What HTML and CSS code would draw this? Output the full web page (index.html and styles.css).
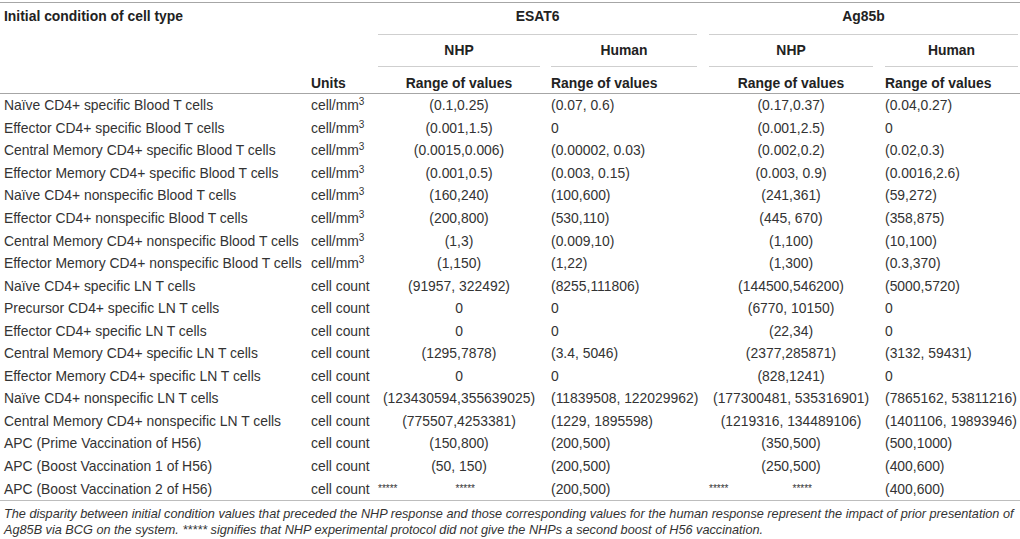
FILE: index.html
```html
<!DOCTYPE html>
<html lang="en">
<head>
<meta charset="utf-8">
<title>Initial conditions</title>
<link rel="stylesheet" href="styles.css">
</head>
<body>
<table class="data">
  <colgroup>
    <col class="w-type"><col class="w-unit"><col class="w-nhp1"><col class="w-hum1"><col class="w-nhp2"><col class="w-hum2">
  </colgroup>
  <thead>
    <tr class="hr1">
      <th class="type" colspan="2">Initial condition of cell type</th>
      <th class="grp g1" colspan="2"><div class="ul">ESAT6</div></th>
      <th class="grp g2" colspan="2"><div class="ul">Ag85b</div></th>
    </tr>
    <tr class="hr2">
      <th colspan="2"></th>
      <th class="nhp1"><div class="ul">NHP</div></th>
      <th class="hum1 ctr"><div class="ul">Human</div></th>
      <th class="nhp2"><div class="ul">NHP</div></th>
      <th class="hum2 ctr"><div class="ul">Human</div></th>
    </tr>
    <tr class="hr3">
      <th></th>
      <th class="unit">Units</th>
      <th class="nhp1">Range of values</th>
      <th class="hum1">Range of values</th>
      <th class="nhp2">Range of values</th>
      <th class="hum2">Range of values</th>
    </tr>
  </thead>
  <tbody>
    <tr><td class="type">Naïve CD4+ specific Blood T cells</td><td class="unit">cell/mm<sup>3</sup></td><td class="nhp1">(0.1,0.25)</td><td class="hum1">(0.07, 0.6)</td><td class="nhp2">(0.17,0.37)</td><td class="hum2">(0.04,0.27)</td></tr>
    <tr><td class="type">Effector CD4+ specific Blood T cells</td><td class="unit">cell/mm<sup>3</sup></td><td class="nhp1">(0.001,1.5)</td><td class="hum1">0</td><td class="nhp2">(0.001,2.5)</td><td class="hum2">0</td></tr>
    <tr><td class="type">Central Memory CD4+ specific Blood T cells</td><td class="unit">cell/mm<sup>3</sup></td><td class="nhp1">(0.0015,0.006)</td><td class="hum1">(0.00002, 0.03)</td><td class="nhp2">(0.002,0.2)</td><td class="hum2">(0.02,0.3)</td></tr>
    <tr><td class="type">Effector Memory CD4+ specific Blood T cells</td><td class="unit">cell/mm<sup>3</sup></td><td class="nhp1">(0.001,0.5)</td><td class="hum1">(0.003, 0.15)</td><td class="nhp2">(0.003, 0.9)</td><td class="hum2">(0.0016,2.6)</td></tr>
    <tr><td class="type">Naïve CD4+ nonspecific Blood T cells</td><td class="unit">cell/mm<sup>3</sup></td><td class="nhp1">(160,240)</td><td class="hum1">(100,600)</td><td class="nhp2">(241,361)</td><td class="hum2">(59,272)</td></tr>
    <tr><td class="type">Effector CD4+ nonspecific Blood T cells</td><td class="unit">cell/mm<sup>3</sup></td><td class="nhp1">(200,800)</td><td class="hum1">(530,110)</td><td class="nhp2">(445, 670)</td><td class="hum2">(358,875)</td></tr>
    <tr><td class="type">Central Memory CD4+ nonspecific Blood T cells</td><td class="unit">cell/mm<sup>3</sup></td><td class="nhp1">(1,3)</td><td class="hum1">(0.009,10)</td><td class="nhp2">(1,100)</td><td class="hum2">(10,100)</td></tr>
    <tr><td class="type">Effector Memory CD4+ nonspecific Blood T cells</td><td class="unit">cell/mm<sup>3</sup></td><td class="nhp1">(1,150)</td><td class="hum1">(1,22)</td><td class="nhp2">(1,300)</td><td class="hum2">(0.3,370)</td></tr>
    <tr><td class="type">Naïve CD4+ specific LN T cells</td><td class="unit">cell count</td><td class="nhp1">(91957, 322492)</td><td class="hum1">(8255,111806)</td><td class="nhp2">(144500,546200)</td><td class="hum2">(5000,5720)</td></tr>
    <tr><td class="type">Precursor CD4+ specific LN T cells</td><td class="unit">cell count</td><td class="nhp1">0</td><td class="hum1">0</td><td class="nhp2">(6770, 10150)</td><td class="hum2">0</td></tr>
    <tr><td class="type">Effector CD4+ specific LN T cells</td><td class="unit">cell count</td><td class="nhp1">0</td><td class="hum1">0</td><td class="nhp2">(22,34)</td><td class="hum2">0</td></tr>
    <tr><td class="type">Central Memory CD4+ specific LN T cells</td><td class="unit">cell count</td><td class="nhp1">(1295,7878)</td><td class="hum1">(3.4, 5046)</td><td class="nhp2">(2377,285871)</td><td class="hum2">(3132, 59431)</td></tr>
    <tr><td class="type">Effector Memory CD4+ specific LN T cells</td><td class="unit">cell count</td><td class="nhp1">0</td><td class="hum1">0</td><td class="nhp2">(828,1241)</td><td class="hum2">0</td></tr>
    <tr><td class="type">Naïve CD4+ nonspecific LN T cells</td><td class="unit">cell count</td><td class="nhp1">(123430594,355639025)</td><td class="hum1">(11839508, 122029962)</td><td class="nhp2">(177300481, 535316901)</td><td class="hum2">(7865162, 53811216)</td></tr>
    <tr><td class="type">Central Memory CD4+ nonspecific LN T cells</td><td class="unit">cell count</td><td class="nhp1">(775507,4253381)</td><td class="hum1">(1229, 1895598)</td><td class="nhp2">(1219316, 134489106)</td><td class="hum2">(1401106, 19893946)</td></tr>
    <tr><td class="type">APC (Prime Vaccination of H56)</td><td class="unit">cell count</td><td class="nhp1">(150,800)</td><td class="hum1">(200,500)</td><td class="nhp2">(350,500)</td><td class="hum2">(500,1000)</td></tr>
    <tr><td class="type">APC (Boost Vaccination 1 of H56)</td><td class="unit">cell count</td><td class="nhp1">(50, 150)</td><td class="hum1">(200,500)</td><td class="nhp2">(250,500)</td><td class="hum2">(400,600)</td></tr>
    <tr><td class="type">APC (Boost Vaccination 2 of H56)</td><td class="unit">cell count</td><td class="nhp1 stars"><div class="starpair s1"><span>*****</span><span>*****</span></div></td><td class="hum1">(200,500)</td><td class="nhp2 stars"><div class="starpair s2"><span>*****</span><span>*****</span></div></td><td class="hum2">(400,600)</td></tr>
  </tbody>
</table>
<p class="note">The disparity between initial condition values that preceded the NHP response and those corresponding values for the human response represent the impact of prior presentation of Ag85B via BCG on the system. ***** signifies that NHP experimental protocol did not give the NHPs a second boost of H56 vaccination.</p>
</body>
</html>
```
FILE: styles.css
```css
html, body {
  margin: 0;
  padding: 0;
  background: #fff;
}
body {
  font-family: "Liberation Sans", Arial, sans-serif;
  color: #333;
  width: 1020px;
}
.data {
  width: 1020px;
  border-collapse: collapse;
  table-layout: fixed;
  margin-top: 2px;
  border-top: 1px solid #a6a6a6;
  border-bottom: 1px solid #bdbdbd;
  font-size: 13.9px;
}
.w-type { width: 308px; }
.w-unit { width: 70px; }
.w-nhp1 { width: 162px; }
.w-hum1 { width: 157px; }
.w-nhp2 { width: 176px; }
.w-hum2 { width: 147px; }

th, td {
  padding: 0;
  font-weight: normal;
  text-align: left;
  white-space: nowrap;
}
th {
  font-weight: bold;
  color: #222;
}
.type { padding-left: 4px; }
.unit { padding-left: 3px; }
.nhp1 { text-align: center; }
.hum1 { padding-left: 11px; }
.nhp2 { padding-left: 12px; text-align: center; }
.hum2 { padding-left: 12px; padding-right: 2px; }
.ctr { text-align: center; }

.g1 { text-align: center; }
.g2 { padding-left: 12px; padding-right: 2px; text-align: center; }

.ul {
  border-bottom: 1px solid #cfcfcf;
}

.hr1 th { height: 32px; vertical-align: top; line-height: 26px; }
.hr1 .ul { height: 31px; }
.hr2 th { height: 32px; vertical-align: top; }
.hr2 .ul { height: 31px; line-height: 30px; }
.hr3 th {
  height: 24px;
  vertical-align: bottom;
  line-height: 16px;
  padding-bottom: 2px;
  border-bottom: 1px solid #a6a6a6;
}

tbody td {
  height: 22.55px;
  line-height: 16px;
  vertical-align: middle;
}
sup {
  font-size: 10px;
  line-height: 0;
  vertical-align: 5px;
}

.starpair {
  display: flex;
  justify-content: flex-start;
  font-size: 10px;
}
.s1 { gap: 58px; }
.s2 { gap: 64px; }

.note {
  margin: 0;
  padding: 5px 4px 0 4px;
  font-size: 12.7px;
  font-style: italic;
  line-height: 16px;
  color: #333;
}
```
